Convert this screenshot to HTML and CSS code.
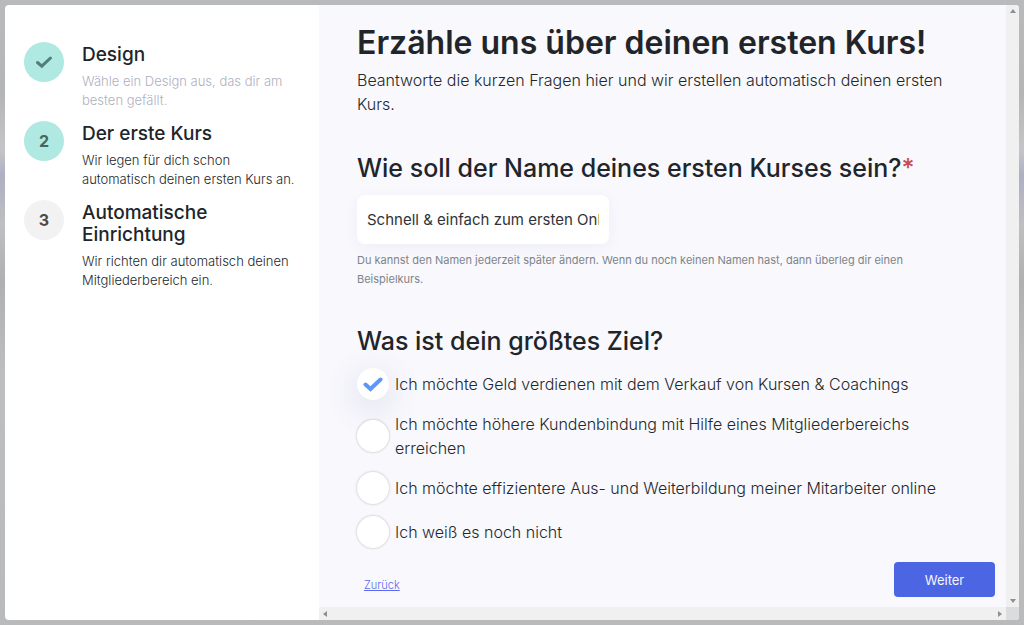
FILE: index.html
```html
<!DOCTYPE html>
<html lang="de">
<head>
<meta charset="utf-8">
<meta name="viewport" content="width=device-width, initial-scale=1">
<title>Der erste Kurs</title>
<link rel="stylesheet" href="styles.css">
</head>
<body>
<div class="dialog">
  <aside class="sidebar">
    <ol class="steps">
      <li class="step step-done">
        <span class="badge">
          <svg class="check" viewBox="0 0 18 14" aria-hidden="true"><path d="M2.5 7.500L6.800 11.200L15.500 3"/></svg>
        </span>
        <div class="step-text">
          <h3>Design</h3>
          <p>Wähle ein Design aus, das dir am besten gefällt.</p>
        </div>
      </li>
      <li class="step step-active">
        <span class="badge">2</span>
        <div class="step-text">
          <h3>Der erste Kurs</h3>
          <p>Wir legen für dich schon automatisch deinen ersten Kurs an.</p>
        </div>
      </li>
      <li class="step">
        <span class="badge">3</span>
        <div class="step-text">
          <h3>Automatische Einrichtung</h3>
          <p>Wir richten dir automatisch deinen Mitgliederbereich ein.</p>
        </div>
      </li>
    </ol>
  </aside>
  <div class="pane">
    <main class="content">
      <h1>Erzähle uns über deinen ersten Kurs!</h1>
      <p class="intro">Beantworte die kurzen Fragen hier und wir erstellen automatisch deinen ersten Kurs.</p>
      <form class="form">
        <label class="question" for="course-name">Wie soll der Name deines ersten Kurses sein?<span class="required">*</span></label>
        <input class="name-field" id="course-name" type="text" value="Schnell &amp; einfach zum ersten Onlinekurs">
        <p class="hint">Du kannst den Namen jederzeit später ändern. Wenn du noch keinen Namen hast, dann überleg dir einen Beispielkurs.</p>
        <fieldset class="goals">
          <legend class="question">Was ist dein größtes Ziel?</legend>
          <label class="goal"><input type="radio" name="goal" checked><span class="mark"><svg class="check" viewBox="0 0 20 16" aria-hidden="true"><path d="M2.500 8.500L7.500 13L17.500 3.500"/></svg></span><span>Ich möchte Geld verdienen mit dem Verkauf von Kursen &amp; Coachings</span></label>
          <label class="goal"><input type="radio" name="goal"><span class="mark"></span><span>Ich möchte höhere Kundenbindung mit Hilfe eines Mitgliederbereichs erreichen</span></label>
          <label class="goal"><input type="radio" name="goal"><span class="mark"></span><span>Ich möchte effizientere Aus- und Weiterbildung meiner Mitarbeiter online</span></label>
          <label class="goal"><input type="radio" name="goal"><span class="mark"></span><span>Ich weiß es noch nicht</span></label>
        </fieldset>
        <div class="actions">
          <a class="back" href="#">Zurück</a>
          <button class="next" type="button">Weiter</button>
        </div>
      </form>
    </main>
    <div class="track track-y" aria-hidden="true">
      <svg viewBox="0 0 6 4"><path d="M3 0L6 4H0Z"/></svg>
      <svg viewBox="0 0 6 4"><path d="M0 0H6L3 4Z"/></svg>
    </div>
    <div class="track track-x" aria-hidden="true">
      <svg viewBox="0 0 4 6"><path d="M4 0V6L0 3Z"/></svg>
      <svg viewBox="0 0 4 6"><path d="M0 0L4 3L0 6Z"/></svg>
    </div>
    <div class="corner"></div>
  </div>
</div>
</body>
</html>
```

FILE: styles.css
```css
* {
  box-sizing: border-box;
}

body {
  margin: 0;
  padding: 5px;
  min-height: 100vh;
  display: flex;
  background: linear-gradient(180deg, #b9babc 0%, #b4b5b7 15%, #c5c5c7 24%, #aeafc3 28%, #bebfc1 36%, #afb0b1 45%, #bdbec0 60%, #b9babc 100%);
  color: #212529;
  font-family: Inter, "Liberation Sans", sans-serif;
  font-size: 16px;
  font-weight: 300;
  line-height: 24px;
}

h1, h3, p {
  margin: 0;
}

.dialog {
  flex: 1;
  display: grid;
  grid-template-columns: 314px 1fr;
  border-radius: 4px;
  overflow: hidden;
  background: #fff;
}

.sidebar {
  padding: 37px 19px;
}

.steps {
  margin: 0;
  padding: 0;
  list-style: none;
  display: flex;
  flex-direction: column;
  gap: 11px;
}

.step {
  display: flex;
  gap: 18px;
}

.badge {
  flex: none;
  width: 40px;
  height: 40px;
  border-radius: 50%;
  display: flex;
  align-items: center;
  justify-content: center;
  background: #f2f2f2;
  color: #4b4b4d;
  font-weight: 700;
}

.step-done .badge,
.step-active .badge {
  background: #b0e8e2;
  color: #446763;
}

.check {
  fill: none;
  stroke-linecap: round;
}

.badge .check {
  width: 18px;
  stroke: #527d79;
  stroke-width: 3;
}

.step-text {
  flex: 1;
  max-width: 214px;
  padding-top: 2px;
}

.step h3 {
  margin-bottom: 6px;
  font-size: 19px;
  font-weight: 500;
  line-height: 22px;
}

.step p {
  color: #24282c;
  font-size: 13px;
  line-height: 19px;
}

.step.step-done p {
  color: #b0b0bf;
}

.pane {
  display: grid;
  grid-template-columns: 1fr 13px;
  grid-template-rows: 1fr 13px;
  background: #f8f8fd;
}

.content {
  padding: 20px 11px 10px 38px;
}

h1 {
  font-size: 32px;
  font-weight: 600;
  line-height: 36px;
}

.intro {
  max-width: 600px;
  margin: 7px 0 36px;
  color: #24282c;
}

.form {
  display: flex;
  flex-direction: column;
}

.question {
  padding: 0;
  font-size: 25px;
  font-weight: 500;
  line-height: 32px;
}

.required {
  color: #c74b53;
}

.name-field {
  width: 252px;
  height: 49px;
  margin: 11px 0 7px;
  padding: 0 10px;
  border: 0;
  border-radius: 8px;
  background: #fff;
  box-shadow: 0 4px 16px rgb(60 60 120 / 5%);
  color: #303438;
  font: inherit;
  font-size: 15px;
  font-weight: 400;
}

.hint {
  max-width: 580px;
  color: #7d848b;
  font-size: 11px;
  font-weight: 400;
  line-height: 19px;
}

.goals {
  margin: 36px 0 0;
  padding: 0;
  border: 0;
  min-width: 0;
}

.goal {
  display: flex;
  align-items: center;
  gap: 6px;
  max-width: 590px;
  min-height: 32px;
  margin-bottom: 12px;
  color: #24282c;
}

.goals .question {
  margin-bottom: 11px;
}

.goal input {
  appearance: none;
  position: absolute;
  margin: 0;
}

.mark {
  flex: none;
  width: 32px;
  height: 32px;
  border-radius: 50%;
  display: flex;
  align-items: center;
  justify-content: center;
  background: #fff;
  box-shadow: 0 0 2px 1px rgb(0 0 0 / 12%);
}

.goal input:checked + .mark {
  box-shadow: 0 8px 32px 4px rgb(70 70 140 / 12%);
}

.mark .check {
  width: 20px;
  stroke: #5d98f8;
  stroke-width: 4;
}

.actions {
  display: flex;
  align-items: flex-end;
  justify-content: space-between;
  padding: 2px 0 0 7px;
}

.back {
  color: #5c69ee;
  font-size: 11px;
}

.next {
  width: 101px;
  height: 35px;
  border: 0;
  border-radius: 4px;
  background: #4b65e3;
  color: #f4f6ff;
  font: inherit;
  font-size: 13px;
  font-weight: 400;
}

.track {
  display: flex;
  align-items: center;
  justify-content: space-between;
  padding: 4px;
  background: #f0f0f0;
}

.track svg {
  fill: #8f8f8f;
}

.track-y {
  flex-direction: column;
}

.track-y svg {
  width: 6px;
  height: 4px;
}

.track-x svg {
  width: 4px;
  height: 6px;
}

.corner {
  background: #dcdcdc;
}
```
